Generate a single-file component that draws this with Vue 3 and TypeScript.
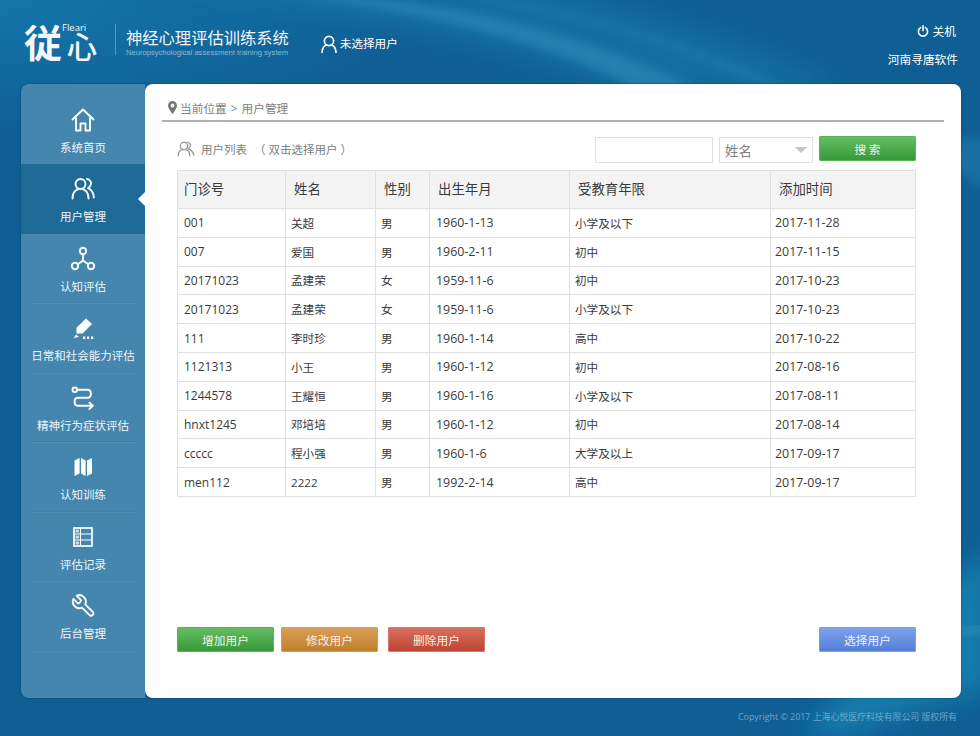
<script setup lang="ts">
interface Patient {
  id: string
  name: string
  gender: string
  birth: string
  edu: string
  added: string
}

const navItems = [
  { key: 'home', label: '系统首页' },
  { key: 'users', label: '用户管理' },
  { key: 'nodes', label: '认知评估' },
  { key: 'pencil', label: '日常和社会能力评估' },
  { key: 'route', label: '精神行为症状评估' },
  { key: 'map', label: '认知训练' },
  { key: 'list', label: '评估记录' },
  { key: 'wrench', label: '后台管理' }
]
const activeKey = 'users'

const patients: Patient[] = [
  { id: '001', name: '关超', gender: '男', birth: '1960-1-13', edu: '小学及以下', added: '2017-11-28' },
  { id: '007', name: '爱国', gender: '男', birth: '1960-2-11', edu: '初中', added: '2017-11-15' },
  { id: '20171023', name: '孟建荣', gender: '女', birth: '1959-11-6', edu: '初中', added: '2017-10-23' },
  { id: '20171023', name: '孟建荣', gender: '女', birth: '1959-11-6', edu: '小学及以下', added: '2017-10-23' },
  { id: '111', name: '李时珍', gender: '男', birth: '1960-1-14', edu: '高中', added: '2017-10-22' },
  { id: '1121313', name: '小王', gender: '男', birth: '1960-1-12', edu: '初中', added: '2017-08-16' },
  { id: '1244578', name: '王耀恒', gender: '男', birth: '1960-1-16', edu: '小学及以下', added: '2017-08-11' },
  { id: 'hnxt1245', name: '邓培培', gender: '男', birth: '1960-1-12', edu: '初中', added: '2017-08-14' },
  { id: 'ccccc', name: '程小强', gender: '男', birth: '1960-1-6', edu: '大学及以上', added: '2017-09-17' },
  { id: 'men112', name: '2222', gender: '男', birth: '1992-2-14', edu: '高中', added: '2017-09-17' }
]
</script>

<template>
  <div class="page">
    <!-- 背景光带 -->
    <svg class="swoosh" width="980" height="736" viewBox="0 0 980 736" aria-hidden="true">
      <defs>
        <filter id="soft" x="-10%" y="-10%" width="120%" height="120%">
          <feGaussianBlur stdDeviation="4" />
        </filter>
        <filter id="softer" x="-10%" y="-10%" width="120%" height="120%">
          <feGaussianBlur stdDeviation="12" />
        </filter>
      </defs>
      <path d="M130 -10 L560 -10 C680 25 790 55 840 90 L620 90 C520 48 360 12 130 -10 Z" fill="#1c7fb0" opacity="0.45" filter="url(#softer)" />
      <path d="M270 -6 C420 10 540 40 640 90 L700 90 C600 38 470 6 340 -6 Z" fill="#3d9ac6" opacity="0.4" filter="url(#soft)" />
      <path d="M440 -6 C560 10 680 45 770 90 L790 90 C690 42 570 8 470 -6 Z" fill="#3d9ac6" opacity="0.22" filter="url(#soft)" />
      <path d="M940 160 C955 170 970 180 990 192 L990 140 C970 130 955 140 940 160 Z" fill="#2a8dbc" opacity="0.35" filter="url(#soft)" />
      <path d="M800 736 C860 680 920 600 990 550 L990 690 C940 700 880 720 850 736 Z" fill="#1486b2" opacity="0.75" filter="url(#softer)" />
      <path d="M950 632 L990 626 L990 630 L950 636 Z" fill="#5fb1d2" opacity="0.5" filter="url(#soft)" />
    </svg>

    <header class="top-bar">
      <div class="brand">
        <div class="logo">
          <span class="logo-first">従</span>
          <span class="logo-heart">心</span>
          <span class="logo-en">Fleari</span>
        </div>
        <div class="brand-rule"></div>
        <div class="brand-text">
          <div class="brand-title">神经心理评估训练系统</div>
          <div class="brand-sub">Neuropsychological assessment training system</div>
        </div>
      </div>
      <div class="current-user">
        <svg width="16" height="18" viewBox="0 0 16 18" fill="none" stroke="#fff" stroke-width="1.7">
          <circle cx="8" cy="6" r="4.6" />
          <path d="M1 17.4 C1.2 13 3.6 10.6 5.6 10 M15 17.4 C14.8 13 12.4 10.6 10.4 10" stroke-linecap="round" />
        </svg>
        <span>未选择用户</span>
      </div>
      <div class="top-right">
        <div class="power">
          <svg width="12" height="12" viewBox="0 0 12 12" fill="none" stroke="#fff" stroke-width="1.6" stroke-linecap="round">
            <path d="M3.6 2.6 A4.6 4.6 0 1 0 8.4 2.6 M6 0.8 V5.6" />
          </svg>
          <span>关机</span>
        </div>
        <div class="vendor">河南寻唐软件</div>
      </div>
    </header>

    <main class="workspace">
      <nav class="side-nav">
        <a
          v-for="item in navItems"
          :key="item.key"
          class="nav-item"
          :class="{ active: item.key === activeKey }"
        >
          <svg class="nav-icon" width="26" height="26" viewBox="0 0 26 26" fill="none" stroke="#fff" stroke-width="1.9" stroke-linejoin="round" stroke-linecap="round">
            <template v-if="item.key === 'home'">
              <path d="M2.5 12.5 L13 2.5 L23.5 12.5" />
              <path d="M6 11 V23.5 H10.5 V16.5 H15.5 V23.5 H20 V11" />
            </template>
            <template v-else-if="item.key === 'users'">
              <circle cx="10.5" cy="8" r="5" />
              <path d="M2.5 22.5 C2.5 17 5.5 14.2 8 13.4 M18.5 22.5 C18.5 17 15.5 14.2 13 13.4" />
              <path d="M17 3 C20 3.4 21.4 6 20.8 8.4 C20.4 10.2 19.4 11.4 18 12.2 C21.4 13.6 23.6 17.2 23.8 21.5" />
            </template>
            <template v-else-if="item.key === 'nodes'">
              <circle cx="13" cy="5" r="3.2" />
              <circle cx="5" cy="20" r="3.2" />
              <circle cx="21" cy="20" r="3.2" />
              <path d="M13 8.4 V14.5 M13 14.5 L7.8 18.2 M13 14.5 L18.2 18.2" />
            </template>
            <template v-else-if="item.key === 'pencil'">
              <path d="M16 3.5 L22 9 L12.5 18.5 L6.5 18.5 L6.5 12.8 Z" fill="#fff" stroke="none" />
              <path d="M3.5 23 L6.2 19.5 L8.8 22 Z" fill="#fff" stroke="none" />
              <path d="M13 22.8 H15.2 M17 22.8 H19.2 M21 22.8 H23.2" stroke-width="2.4" stroke-linecap="butt" />
            </template>
            <template v-else-if="item.key === 'route'">
              <circle cx="4.8" cy="4.8" r="2.3" />
              <path d="M7.2 4.8 H17.5 C22 4.8 22 12.8 17.5 12.8 H8 C3.5 12.8 3.5 20.8 8 20.8 H22.5" />
              <path d="M19.4 17.6 L22.8 20.8 L19.4 24" />
            </template>
            <template v-else-if="item.key === 'map'">
              <path d="M4.5 6.5 L9.6 4 V19.5 L4.5 22 Z M11 4 L15.6 6.5 V22 L11 19.5 Z M17 6.5 L22 4 V19.5 L17 22 Z" fill="#fff" stroke="none" />
            </template>
            <template v-else-if="item.key === 'list'">
              <rect x="4" y="4" width="18" height="18" stroke-width="1.7" stroke-linejoin="miter" />
              <path d="M4 10 H22 M4 16 H22 M10.5 4 V22" stroke-width="1.1" stroke-linecap="butt" />
              <path d="M5.6 5.6 H9 V8.6 H5.6 Z M5.6 11.5 H9 V14.5 H5.6 Z M5.6 17.5 H9 V20.5 H5.6 Z" fill="#c9dce8" stroke="none" />
            </template>
            <template v-else>
              <g transform="translate(26.6 0) scale(-1.08 1.08)">
                <path d="M14.7 6.3a1 1 0 0 0 0 1.4l1.6 1.6a1 1 0 0 0 1.4 0l3.77-3.77a6 6 0 0 1-7.94 7.94l-6.91 6.91a2.12 2.12 0 0 1-3-3l6.91-6.91a6 6 0 0 1 7.94-7.94l-3.76 3.76z" stroke-width="1.7" />
              </g>
            </template>
          </svg>
          <span class="nav-label">{{ item.label }}</span>
        </a>
      </nav>

      <section class="panel">
        <div class="crumb">
          <svg width="9" height="13" viewBox="0 0 9 13">
            <path fill-rule="evenodd" fill="#777" d="M4.5 0 C7 0 9 2 9 4.4 C9 7.2 6 10.6 4.5 13 C3 10.6 0 7.2 0 4.4 C0 2 2 0 4.5 0 Z M4.5 2.6 A1.9 1.9 0 1 0 4.5 6.4 A1.9 1.9 0 1 0 4.5 2.6 Z" />
          </svg>
          <span>当前位置 &gt; 用户管理</span>
        </div>

        <div class="toolbar">
          <div class="list-title">
            <svg width="18" height="16" viewBox="0 0 26 24" fill="none" stroke="#999" stroke-width="2" stroke-linecap="round">
              <circle cx="10" cy="7.5" r="5.6" />
              <path d="M1.5 22 C1.5 16 5 13.5 7.5 13 M18.5 22 C18.5 16 15 13.5 12.5 13" />
              <path d="M15 1.8 C18.6 1.8 20 5 19.4 7.5 C19 9.6 17.6 10.8 16.2 11.6 C19.8 13 23.5 16.5 24.8 21" />
            </svg>
            <span>用户列表</span>
            <span class="hint">（ 双击选择用户 ）</span>
          </div>
          <div class="search">
            <input class="search-input" type="text" />
            <div class="search-select">
              <span>姓名</span>
              <i class="caret"></i>
            </div>
            <button class="btn btn-green search-btn">搜 索</button>
          </div>
        </div>

        <table class="user-table">
          <colgroup>
            <col style="width: 108px" />
            <col style="width: 90px" />
            <col style="width: 54px" />
            <col style="width: 140px" />
            <col style="width: 201px" />
            <col style="width: 145px" />
          </colgroup>
          <thead>
            <tr>
              <th>门诊号</th>
              <th>姓名</th>
              <th>性别</th>
              <th>出生年月</th>
              <th>受教育年限</th>
              <th>添加时间</th>
            </tr>
          </thead>
          <tbody>
            <tr v-for="(p, i) in patients" :key="i">
              <td>{{ p.id }}</td>
              <td>{{ p.name }}</td>
              <td>{{ p.gender }}</td>
              <td>{{ p.birth }}</td>
              <td>{{ p.edu }}</td>
              <td>{{ p.added }}</td>
            </tr>
          </tbody>
        </table>

        <div class="actions">
          <button class="btn btn-green">增加用户</button>
          <button class="btn btn-orange">修改用户</button>
          <button class="btn btn-red">删除用户</button>
          <button class="btn btn-blue select-btn">选择用户</button>
        </div>
      </section>
    </main>

    <footer class="copyright">Copyright © 2017 上海心悦医疗科技有限公司 版权所有</footer>
  </div>
</template>

<style scoped>
.page {
  position: relative;
  width: 980px;
  height: 736px;
  overflow: hidden;
  background:
    radial-gradient(ellipse 420px 130px at 0 0, #1476aa 0%, rgba(20, 118, 170, 0) 100%),
    #105f94;
  font-family: "Open Sans", "Noto Sans CJK SC", sans-serif;
  color: #fff;
}

.swoosh {
  position: absolute;
  left: 0;
  top: 0;
}

.top-bar {
  position: relative;
  height: 84px;
  display: flex;
  align-items: flex-start;
  padding: 0 22px 0 24px;
  box-sizing: border-box;
}

.brand {
  display: flex;
  align-items: flex-start;
  margin-top: 22px;
}

.logo {
  position: relative;
  display: flex;
  align-items: flex-end;
  width: 91px;
  height: 38px;
  font-family: "Noto Sans CJK JP", sans-serif;
  font-weight: 700;
  color: #f4f6f7;
}

.logo-first {
  font-size: 38px;
  line-height: 38px;
}

.logo-heart {
  font-size: 30px;
  line-height: 30px;
  font-weight: 500;
  margin-left: 5px;
}

/* 英文字标压在“心”字上方 */
.logo-en {
  position: absolute;
  left: 38px;
  top: 1px;
  font-family: "Open Sans", sans-serif;
  font-size: 9.5px;
  font-weight: 400;
  line-height: 10px;
}

.brand-rule {
  width: 1px;
  height: 31px;
  margin: 2px 10px 0 0;
  background: rgba(255, 255, 255, 0.3);
}

.brand-text {
  margin-top: 5px;
}

.brand-title {
  font-size: 16.3px;
  line-height: 22px;
  color: #f2f7fa;
}

.brand-sub {
  margin-top: -1px;
  font-family: "Liberation Sans", sans-serif;
  font-size: 7.6px;
  line-height: 10px;
  color: #8fb8d3;
  white-space: nowrap;
}

.current-user {
  display: flex;
  align-items: center;
  gap: 3px;
  margin: 35px 0 0 32px;
  font-size: 11.6px;
  line-height: 18px;
}

.top-right {
  margin-left: auto;
  display: flex;
  flex-direction: column;
  align-items: flex-end;
  font-size: 11.7px;
  padding-top: 23px;
}

.power {
  display: flex;
  align-items: center;
  gap: 4px;
  line-height: 16px;
  margin-right: 2px;
}

.vendor {
  margin-top: 12px;
  line-height: 16px;
}

.workspace {
  position: relative;
  display: flex;
  height: 614px;
  margin: 0 19px 0 21px;
  border-radius: 8px;
  box-shadow: 0 0 2px rgba(0, 35, 70, 0.7);
}

.side-nav {
  width: 124px;
  flex: none;
  padding-top: 10.5px;
  box-sizing: border-box;
  background: #4586ae;
  border-radius: 8px 0 0 8px;
}

.nav-item {
  position: relative;
  display: flex;
  flex-direction: column;
  align-items: center;
  height: 69.5px;
  padding-top: 12px;
  box-sizing: border-box;
  color: #eef4f8;
}

/* 分隔线不贯通整列 */
.nav-item:not(:first-child):not(.active)::before {
  content: "";
  position: absolute;
  left: 11px;
  right: 8px;
  bottom: 0;
  height: 1px;
  background: #3f80a8;
  box-shadow: 0 1px 0 #4f8db3;
}

.nav-item.active {
  background: #1e6b97;
}

.nav-item.active::after {
  content: "";
  position: absolute;
  right: 0;
  top: 28px;
  border: 7px solid transparent;
  border-left: 0;
  border-right-color: #fff;
}

.nav-label {
  margin-top: 7px;
  font-size: 11.5px;
  line-height: 16px;
  white-space: nowrap;
}

.panel {
  flex: 1;
  display: flex;
  flex-direction: column;
  padding: 0 17px 46px 17px;
  box-sizing: border-box;
  background: #fff;
  border-radius: 8px;
  color: #333;
}

.crumb {
  display: flex;
  align-items: center;
  gap: 3px;
  height: 38px;
  box-sizing: border-box;
  padding: 10px 0 0 6px;
  border-bottom: 2px solid #b0b0b0;
  font-size: 11.7px;
  word-spacing: 1px;
  color: #808080;
}

.toolbar {
  display: flex;
  justify-content: space-between;
  align-items: flex-start;
  height: 48px;
  padding: 14px 28px 0 15px;
  box-sizing: border-box;
}

.list-title {
  display: flex;
  align-items: center;
  gap: 6px;
  height: 26px;
  font-size: 11.5px;
  color: #808080;
}

.hint {
  margin-left: 1px;
}

.search {
  display: flex;
  align-items: flex-start;
}

.search-input {
  width: 118px;
  height: 26px;
  box-sizing: border-box;
  border: 1px solid #d8dfe6;
  outline: none;
  margin: 1px 6px 0 0;
}

.search-select {
  display: flex;
  align-items: center;
  justify-content: space-between;
  width: 94px;
  height: 26px;
  box-sizing: border-box;
  margin-top: 1px;
  padding: 0 5px 1px;
  border: 1px solid #d8dfe6;
  font-size: 13.4px;
  color: #808080;
}

.caret {
  border: 6px solid transparent;
  border-top: 6px solid #c4c4c4;
  border-bottom: 0;
}

.btn {
  width: 97px;
  height: 25px;
  box-sizing: border-box;
  font-family: "Noto Sans CJK SC", sans-serif;
  font-size: 11.7px;
  color: #f2f2f2;
  padding: 0 0 1px;
  border-radius: 1px;
}

.search-btn {
  margin-left: 6px;
}

.btn-green {
  background: linear-gradient(#66bd62, #37993a);
  border: 1px solid #55b455;
}

.btn-orange {
  background: linear-gradient(#d89f56, #c07f2e);
  border: 1px solid #d29a52;
}

.btn-red {
  background: linear-gradient(#d8705e, #bd4434);
  border: 1px solid #dc7669;
  margin-left: 3px;
}

.btn-blue {
  background: linear-gradient(#7ea2ec, #5480d8);
  border: 1px solid #77a0ea;
}

.user-table {
  width: 738px;
  margin-left: 15px;
  border-collapse: collapse;
  table-layout: fixed;
  font-size: 12.4px;
  color: #3a3a3a;
}

.user-table th,
.user-table td {
  border: 1px solid #e0e0e0;
  text-align: left;
  white-space: nowrap;
}

.user-table th {
  height: 34px;
  padding: 0 8px 3px;
  background: #f3f3f3;
  font-size: 13.4px;
  font-weight: 400;
}

.user-table td {
  height: 27.8px;
  padding: 0 5px;
}

.user-table td:first-child {
  font-size: 12px;
}

.user-table td:nth-child(2),
.user-table td:nth-child(3),
.user-table td:nth-child(5) {
  font-size: 11.6px;
}

.user-table td:nth-child(4),
.user-table td:first-child,
.user-table th:first-child {
  padding-left: 6px;
}

.user-table td:nth-child(6) {
  padding-left: 4px;
}

.actions {
  display: flex;
  gap: 7px;
  margin: auto 28px 0 15px;
}

.select-btn {
  margin-left: auto;
}

.copyright {
  position: relative;
  padding: 12px 23px 0 0;
  text-align: right;
  font-size: 8.9px;
  line-height: 14px;
  color: #6ea6c9;
}
</style>

<style>
html,
body {
  margin: 0;
  background: #105f94;
}
</style>
